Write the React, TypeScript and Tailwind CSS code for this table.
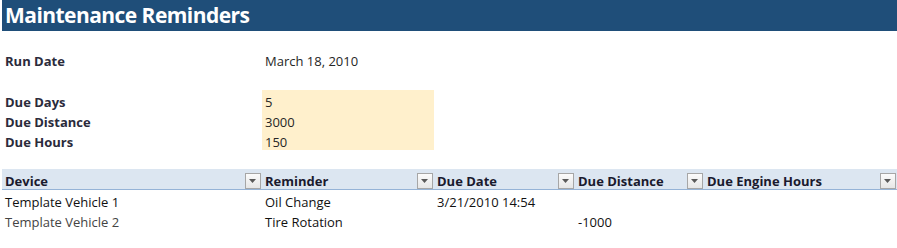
import { ReactNode } from 'react';

const font = { fontFamily: '"Open Sans", "Noto Sans", sans-serif' };

function FilterButton() {
  return (
    <span className="self-end w-[16px] h-[16px] border border-[#a6a6a6] bg-gradient-to-b from-[#fbfbfb] to-[#e6e6e6] flex items-center justify-center shrink-0">
      <svg width="8" height="5" viewBox="0 0 8 5">
        <path d="M0 0 H7 L3.5 4 Z" fill="#595959" />
      </svg>
    </span>
  );
}

function HeaderCell({ children, width }: { children: ReactNode; width: string }) {
  return (
    <div className={`${width} flex justify-between pl-[3px] pr-[1px]`}>
      <span className="self-center pt-[4px]">{children}</span>
      <FilterButton />
    </div>
  );
}

function ParamRow({ label, value }: { label: string; value: string }) {
  return (
    <div className="flex h-[20px]">
      <div className="w-[260px] pl-[3px] pt-[4px] flex items-center font-bold text-[#2b2b3b]">{label}</div>
      <div className="w-[172px] pl-[3px] pt-[4px] flex items-center bg-[#fff0cc] text-[#262626]">{value}</div>
    </div>
  );
}

export default function App() {
  return (
    <div className="w-[897px] h-[248px] bg-white pl-[2px] text-[13px] leading-none" style={font}>
      <div className="h-[31px] bg-[#1f4e79] flex items-center pl-[3px]">
        <h1 className="text-white font-bold text-[21px] tracking-[-0.55px]">Maintenance Reminders</h1>
      </div>

      <div className="h-[20px]" />
      <div className="flex h-[20px] items-center pt-[1px]">
        <div className="w-[260px] pl-[3px] font-bold text-[#2b2b3b]">Run Date</div>
        <div className="pl-[3px] text-[#262626]">March 18, 2010</div>
      </div>
      <div className="h-[19px]" />

      <ParamRow label="Due Days" value="5" />
      <ParamRow label="Due Distance" value="3000" />
      <ParamRow label="Due Hours" value="150" />

      <div className="h-[19px]" />

      <div className="flex h-[21px] bg-[#dce6f1] border-b border-[#95b3d7] font-bold text-[#1a1a2e]">
        <HeaderCell width="w-[260px]">Device</HeaderCell>
        <HeaderCell width="w-[172px]">Reminder</HeaderCell>
        <HeaderCell width="w-[141px]">Due Date</HeaderCell>
        <HeaderCell width="w-[129px]">Due Distance</HeaderCell>
        <HeaderCell width="w-[193px]">Due Engine Hours</HeaderCell>
      </div>

      <div className="flex h-[20px] items-center pt-[4px] text-[#111]">
        <div className="w-[260px] pl-[3px]">Template Vehicle 1</div>
        <div className="w-[172px] pl-[3px]">Oil Change</div>
        <div className="w-[141px] pl-[3px]">3/21/2010 14:54</div>
        <div className="w-[129px] pl-[3px]"></div>
      </div>
      <div className="flex h-[20px] items-center pt-[4px] text-[#111]">
        <div className="w-[260px] pl-[3px] text-[#444]">Template Vehicle 2</div>
        <div className="w-[172px] pl-[3px]">Tire Rotation</div>
        <div className="w-[141px] pl-[3px]"></div>
        <div className="w-[129px] pl-[3px]">-1000</div>
      </div>
    </div>
  );
}
